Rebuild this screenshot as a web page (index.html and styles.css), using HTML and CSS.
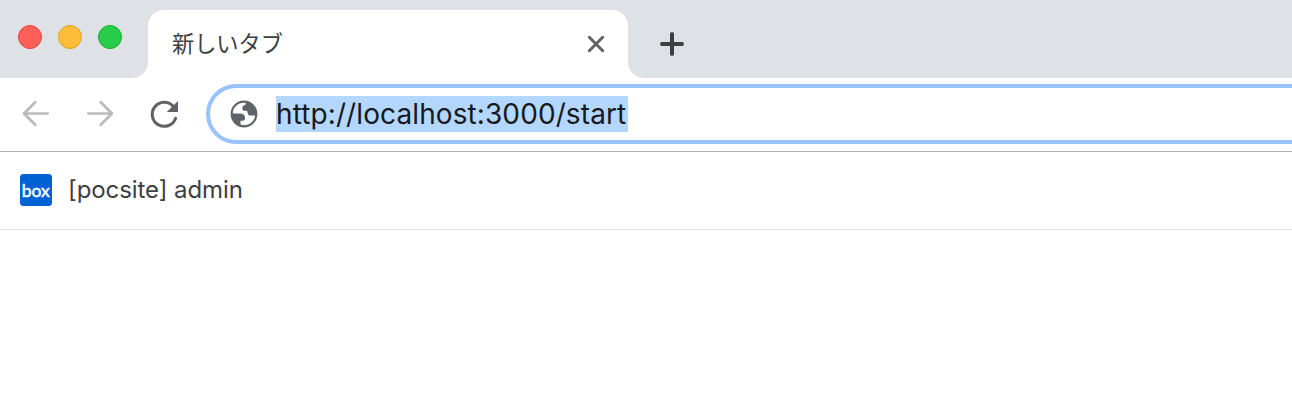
FILE: index.html
```html
<!DOCTYPE html>
<html lang="ja">
<head>
<meta charset="utf-8">
<title>新しいタブ</title>
<link rel="stylesheet" href="styles.css">
</head>
<body>
<header class="tabstrip">
  <div class="lights"><i class="light red"></i><i class="light yellow"></i><i class="light green"></i></div>
  <div class="tab">
    <span class="tab-title">新しいタブ</span>
    <svg class="close" viewBox="0 0 24 24"><path d="M5.3 5.3 18.7 18.7M18.7 5.3 5.3 18.7"/></svg>
  </div>
  <svg class="plus" viewBox="0 0 24 24"><path d="M2 12H22M12 2V22"/></svg>
</header>
<nav class="toolbar">
  <svg class="nav dim" viewBox="0 0 32 32"><path d="M27.7 15.5H4.5M15.2 4.2 4 15.5 15.2 26.8"/></svg>
  <svg class="nav dim" viewBox="0 0 32 32"><path d="M4.3 15.5H27.5M16.8 4.2 28 15.5 16.8 26.8"/></svg>
  <svg class="nav" viewBox="0 0 32 32"><path d="M27.6 20.2A12 12 0 1 1 25 8.1"/><path class="solid" d="M30 3V14H18.8Z"/></svg>
  <div class="omnibox">
    <svg class="globe" viewBox="0 0 28 28"><circle cx="14" cy="14" r="13.4"/><path d="M2.8 13.6C2.8 7.6 7.8 2.8 14 2.8H15.6V3.6C15.6 4.8 15 5.3 14 5.5C12.9 5.7 12.4 6.4 12.4 7.4V8.7C12.4 10 13.2 10.7 14.4 10.7H15.8C17.1 10.7 17.7 11.6 17.7 12.8C17.7 14.4 18.5 15.4 19.9 15.4H25.1C24.4 21 19.9 25.2 14 25.2C12.7 25.2 11.6 25 10.5 24.6V20.8H12.8C14.2 20.8 15 19.9 15 18.6V17.4C15 15.1 12.9 13.6 10.3 13.6Z"/></svg>
    <span class="url">http://localhost:3000/start</span>
  </div>
</nav>
<div class="bookmarks">
  <svg class="box" viewBox="0 0 32 32"><rect width="32" height="32" rx="3.5"/><text x="1.8" y="22.5" textLength="28" lengthAdjust="spacingAndGlyphs">box</text></svg>
  <span class="bookmark">[pocsite] admin</span>
</div>
</body>
</html>
```
FILE: styles.css
```css
body { margin: 0; background: #fff; font-family: Inter, "Noto Sans CJK JP", sans-serif; overflow: hidden; }
svg { display: block; flex: none; fill: none; stroke-linecap: round; stroke-linejoin: round; }
.tabstrip { display: flex; height: 78px; background: #dee1e6; }
.lights { display: flex; gap: 16px; width: 130px; padding: 25px 0 0 18px; }
.light { box-sizing: border-box; width: 24px; height: 24px; border: 1px solid; border-radius: 50%; }
.red { background: #ff5f57; border-color: #e2463f; }
.yellow { background: #febc38; border-color: #dfa023; }
.green { background: #28ce4b; border-color: #1bac2c; }
.tab { position: relative; box-sizing: border-box; display: flex; align-items: center; justify-content: space-between; width: 480px; height: 68px; margin-top: 10px; padding: 0 20px 0 24px; background: #fff; border-radius: 16px 16px 0 0; }
.tab::before, .tab::after { content: ""; position: absolute; bottom: 0; width: 16px; height: 16px; }
.tab::before { right: 100%; background: radial-gradient(circle at 0 0, #dee1e6 15.5px, #fff 16.5px); }
.tab::after { left: 100%; background: radial-gradient(circle at 100% 0, #dee1e6 15.5px, #fff 16.5px); }
.tab-title { padding-bottom: 5px; font: 22.2px/32px "Noto Sans CJK JP", sans-serif; color: #3c4043; }
.close { width: 24px; height: 24px; stroke: #5f6368; stroke-width: 3; }
.plus { width: 24px; height: 24px; margin: 32px 0 0 32px; stroke: #3c4043; stroke-width: 4; }
.toolbar { box-sizing: border-box; display: flex; align-items: center; height: 74px; padding: 0 0 1px 20px; border-bottom: 1px solid #b3b3b3; }
.nav { width: 32px; height: 32px; margin-right: 32px; stroke: #5f6368; stroke-width: 3; }
.dim { stroke: #bababa; stroke-width: 2.7; }
.nav:nth-child(3) { margin-right: 26px; }
.solid { fill: #5f6368; stroke: none; }
.omnibox { box-sizing: border-box; display: flex; align-items: center; flex: 1; height: 60px; padding-left: 20px; border: 4px solid #99c2ff; border-right: 0; border-radius: 30px 0 0 30px; }
.globe { width: 28px; height: 28px; margin-right: 18px; }
.globe circle { fill: #5f6368; }
.globe path { fill: #fff; }
.url { width: 352px; height: 36px; background: #b3d7ff; color: #17191c; font-size: 28px; line-height: 37px; letter-spacing: 0.1px; white-space: nowrap; }
.bookmarks { box-sizing: border-box; display: flex; align-items: center; gap: 16px; height: 78px; padding: 0 0 1px 20px; border-bottom: 1px solid #e1e1e1; }
.box { width: 32px; height: 32px; }
.box rect { fill: #0061d5; }
.box text { fill: #fff; stroke: #fff; stroke-width: 0.5px; font: 400 18px Lato, sans-serif; }
.bookmark { color: #3c4043; font-size: 24px; line-height: 32px; letter-spacing: -0.08px; white-space: nowrap; }
```
